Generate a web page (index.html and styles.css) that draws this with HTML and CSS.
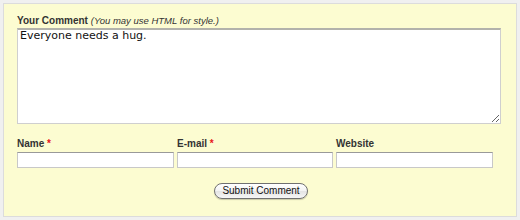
FILE: index.html
```html
<!doctype html>
<html lang="en">
<head>
    <meta charset="utf-8">
    <title>Leave a comment</title>
    <link rel="stylesheet" href="styles.css">
</head>
<body>
    <form class="comment-form" action="#" method="post">
        <label class="field-label" for="comment">Your Comment <em class="hint">(You may use HTML for style.)</em></label>
        <textarea id="comment" name="comment">Everyone needs a hug.</textarea>

        <div class="author-fields">
            <div class="field">
                <label class="field-label" for="author">Name <span class="required">*</span></label>
                <input type="text" id="author" name="author">
            </div>
            <div class="field">
                <label class="field-label" for="email">E-mail <span class="required">*</span></label>
                <input type="text" id="email" name="email">
            </div>
            <div class="field">
                <label class="field-label" for="url">Website</label>
                <input type="text" id="url" name="url">
            </div>
        </div>

        <div class="submit-row">
            <button type="submit" class="submit-button">Submit Comment</button>
        </div>
    </form>
</body>
</html>
```

FILE: styles.css
```css
* {
    box-sizing: border-box;
}
body {
    margin: 0;
    padding: 3px;
    background-color: #f0f0f0;
    font-family: "Liberation Sans", Arial, sans-serif;
    font-size: 10px;
    color: #333;
}
.comment-form {
    height: 214px;
    border: 1px solid #dcdcdc;
    background-color: #fcfcd1;
    padding: 11px 14px 0 13px;
}
.field-label {
    display: block;
    font-weight: bold;
    line-height: 12px;
    margin-bottom: 1px;
    color: #333;
}
.hint {
    font-weight: normal;
    font-style: italic;
    font-size: 9.5px;
}
.required {
    color: #e8141a;
}
.comment-form textarea {
    display: block;
    width: 484px;
    height: 96px;
    margin: 0;
    padding: 0 2px;
    border: 1px solid #cfcfcf;
    border-top: 2px solid #b2b2ab;
    background-color: #fff;
    font-family: "DejaVu Sans", Verdana, sans-serif;
    font-size: 11px;
    line-height: 12px;
    color: #111;
}
.author-fields {
    display: grid;
    grid-template-columns: 157px 156px 157px;
    column-gap: 3px;
    margin-top: 14px;
}
.author-fields .field-label {
    margin-bottom: 2px;
}
input[type="text"] {
    display: block;
    width: 100%;
    height: 16px;
    margin: 0;
    padding: 0 2px;
    border: 1px solid #c8c8c8;
    border-top-color: #999;
    background-color: #fff;
    font-family: "Liberation Sans", Arial, sans-serif;
    font-size: 10px;
}
.submit-row {
    text-align: center;
    margin-top: 15px;
    padding-left: 3px;
}
.submit-button {
    height: 16px;
    padding: 0 7px;
    border: 1px solid #707070;
    border-radius: 8px;
    background: linear-gradient(#ffffff, #f3f3f3 50%, #e4e4e4 51%, #f6f6f6);
    box-shadow: 0 1px 1px rgba(0, 0, 0, 0.2);
    font-family: "Liberation Sans", Arial, sans-serif;
    font-size: 10px;
    line-height: 14px;
    color: #111;
}
```
